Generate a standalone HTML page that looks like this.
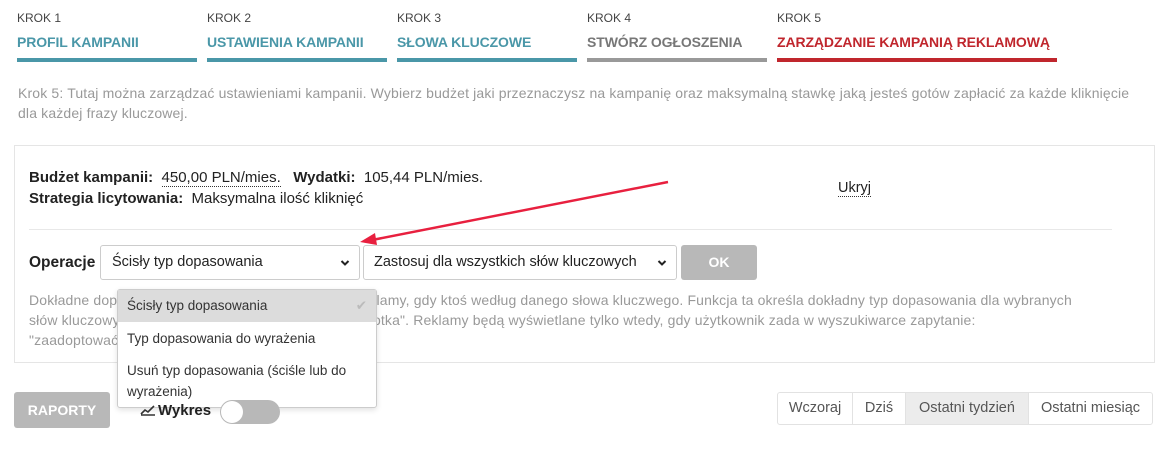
<!DOCTYPE html>
<html><head><meta charset="utf-8"><style>
*{box-sizing:border-box;margin:0;padding:0}
body{width:1172px;height:451px;background:#fff;font-family:"Liberation Sans",Arial,sans-serif;position:relative;overflow:hidden;color:#222}
.a{position:absolute;white-space:nowrap}
.k{font-size:12px;color:#444;top:11px}
.t{font-size:14px;font-weight:bold;top:34px;letter-spacing:-0.1px}
.bar{position:absolute;top:58px;height:4px;width:184px}
.g{color:#999;font-size:14px;line-height:20px;letter-spacing:0.15px}
.sel{position:absolute;border:1px solid #ccc;border-radius:3px;background:#fff;font-size:14.5px;color:#222;padding:0 0 0 11px;line-height:33px;height:35px}
.sel svg{position:absolute;right:9px;top:13px}
.seg{position:absolute;top:392px;height:33px;border:1px solid #e2e2e2;font-size:14.5px;color:#555;line-height:31px;text-align:center}
</style></head><body>
<div class="a k" style="left:17px">KROK 1</div><div class="a t" style="left:17px;color:#4a97a8">PROFIL KAMPANII</div><div class="bar" style="left:17px;width:180px;background:#4a97a8"></div>
<div class="a k" style="left:207px">KROK 2</div><div class="a t" style="left:207px;color:#4a97a8">USTAWIENIA KAMPANII</div><div class="bar" style="left:207px;width:180px;background:#4a97a8"></div>
<div class="a k" style="left:397px">KROK 3</div><div class="a t" style="left:397px;color:#4a97a8">SŁOWA KLUCZOWE</div><div class="bar" style="left:397px;width:180px;background:#4a97a8"></div>
<div class="a k" style="left:587px">KROK 4</div><div class="a t" style="left:587px;color:#777">STWÓRZ OGŁOSZENIA</div><div class="bar" style="left:587px;width:180px;background:#999"></div>
<div class="a k" style="left:777px">KROK 5</div><div class="a t" style="left:777px;color:#c0262d">ZARZĄDZANIE KAMPANIĄ REKLAMOWĄ</div><div class="bar" style="left:777px;width:280px;background:#c0262d"></div>

<div class="a g" style="left:18px;top:83px">Krok 5: Tutaj można zarządzać ustawieniami kampanii. Wybierz budżet jaki przeznaczysz na kampanię oraz maksymalną stawkę jaką jesteś gotów zapłacić za każde kliknięcie<br>dla każdej frazy kluczowej.</div>

<div style="position:absolute;left:14px;top:145px;width:1141px;height:218px;border:1px solid #e5e5e5"></div>
<div class="a" style="left:29px;top:169px;font-size:15px"><b>Budżet kampanii:</b>&nbsp; <span style="border-bottom:1px dotted #333">450,00 PLN/mies.</span> &nbsp;&nbsp;<b>Wydatki:</b>&nbsp; 105,44 PLN/mies.</div>
<div class="a" style="left:29px;top:190px;font-size:15px"><b>Strategia licytowania:</b>&nbsp; Maksymalna ilość kliknięć</div>
<div class="a" style="left:838px;top:180px;font-size:14.5px;border-bottom:1px dotted #333;line-height:16px">Ukryj</div>
<div style="position:absolute;left:29px;top:229px;width:1083px;height:1px;background:#e8e8e8"></div>

<div class="a" style="left:29px;top:254px;font-size:15.5px;font-weight:bold">Operacje</div>
<div class="sel" style="left:100px;top:245px;width:260px">Ścisły typ dopasowania<svg width="10" height="8" viewBox="0 0 10 8"><path d="M1.5 2 L5 5.5 L8.5 2" stroke="#222" stroke-width="2" fill="none"/></svg></div>
<div class="sel" style="left:363px;top:245px;width:314px;padding-left:10px">Zastosuj dla wszystkich słów kluczowych<svg width="10" height="8" viewBox="0 0 10 8"><path d="M1.5 2 L5 5.5 L8.5 2" stroke="#222" stroke-width="2" fill="none"/></svg></div>
<div class="a" style="left:681px;top:245px;width:76px;height:35px;background:#b8b8b8;border-radius:3px;color:#fff;font-weight:bold;font-size:14px;text-align:center;line-height:35px">OK</div>

<div class="a g" style="left:29px;top:290px">Dokładne dopasowanie słów kluczowych wyświetla reklamy, gdy ktoś według danego słowa kluczwego. Funkcja ta określa dokładny typ dopasowania dla wybranych<br>słów kluczowych. Np. słowo kluczowe "zaadoptować kotka". Reklamy będą wyświetlane tylko wtedy, gdy użytkownik zada w wyszukiwarce zapytanie:<br>"zaadoptować kotka".</div>

<div style="position:absolute;left:117px;top:289px;width:260px;height:119px;background:#fff;border:1px solid #ccc;border-radius:3px;box-shadow:0 2px 6px rgba(0,0,0,.12);font-size:13.5px;color:#333">
<div style="position:absolute;left:0;top:0;right:0;height:32px;background:#dcdcdc;padding-left:9px;line-height:32px">Ścisły typ dopasowania<span style="position:absolute;right:9px;color:#bbb">✔</span></div>
<div style="position:absolute;left:9px;top:41px">Typ dopasowania do wyrażenia</div>
<div style="position:absolute;left:9px;top:70px;line-height:21px">Usuń typ dopasowania (ściśle lub do<br>wyrażenia)</div>
</div>

<svg class="a" style="left:0;top:0" width="1172" height="451"><line x1="668" y1="182" x2="372" y2="240" stroke="#e8203f" stroke-width="2.5"/><path d="M360 242 L375 233 L377 245 Z" fill="#e8203f"/></svg>

<div class="a" style="left:14px;top:392px;width:96px;height:36px;background:#b8b8b8;border-radius:3px;color:#fff;font-weight:bold;font-size:14px;text-align:center;line-height:36px">RAPORTY</div>
<svg class="a" style="left:140px;top:404px" width="16" height="12"><path d="M1 10 L5 6 L8 8 L14 2 M1 11 H15" stroke="#333" stroke-width="1.6" fill="none"/></svg>
<div class="a" style="left:158px;top:402px;font-size:15px;font-weight:bold">Wykres</div>
<div class="a" style="left:220px;top:400px;width:60px;height:24px;background:#b8b8b8;border-radius:12px"><div style="position:absolute;left:1px;top:1px;width:22px;height:22px;border-radius:50%;background:#fff"></div></div>

<div class="seg" style="left:777px;width:76px;border-radius:3px 0 0 3px">Wczoraj</div>
<div class="seg" style="left:852px;width:54px">Dziś</div>
<div class="seg" style="left:905px;width:124px;background:#ececec">Ostatni tydzień</div>
<div class="seg" style="left:1028px;width:125px;border-radius:0 3px 3px 0">Ostatni miesiąc</div>
</body></html>
